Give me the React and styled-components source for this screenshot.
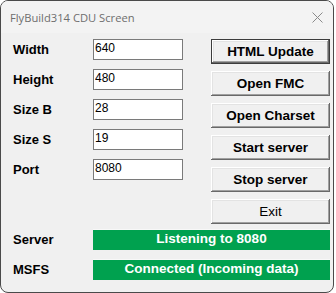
import React from 'react'
import styled, { createGlobalStyle } from 'styled-components'

const Global = createGlobalStyle`
    html, body {
        margin: 0;
        padding: 0;
        background: #ffffff;
    }
`;

const fields = [
    { label: 'Width', value: '640' },
    { label: 'Height', value: '480' },
    { label: 'Size B', value: '28' },
    { label: 'Size S', value: '19' },
    { label: 'Port', value: '8080' },
];

const buttons = ['HTML Update', 'Open FMC', 'Open Charset', 'Start server', 'Stop server', 'Exit'];

const status = [
    { label: 'Server', text: 'Listening to 8080' },
    { label: 'MSFS', text: 'Connected (Incoming data)' },
];

function App() {
    return (
        <>
            <Global />
            <Window>
                <TitleBar>
                    <Title>FlyBuild314 CDU Screen</Title>
                    <Close>
                        <svg width="11" height="11" viewBox="0 0 11 11">
                            <path d="M0.5 0.5 L10.5 10.5 M10.5 0.5 L0.5 10.5" stroke="#8a8a8a" strokeWidth="1" fill="none" />
                        </svg>
                    </Close>
                </TitleBar>
                <Body>
                    <Top>
                        <Fields>
                            {fields.map(f => (
                                <FieldRow key={f.label}>
                                    <Label>{f.label}</Label>
                                    <Input defaultValue={f.value} />
                                </FieldRow>
                            ))}
                        </Fields>
                        <Buttons>
                            {buttons.map((b, i) => (
                                <Button key={b} $default={i === 0} $exit={b === 'Exit'}>{b}</Button>
                            ))}
                        </Buttons>
                    </Top>
                    <StatusList>
                        {status.map(s => (
                            <FieldRow key={s.label}>
                                <Label>{s.label}</Label>
                                <StatusBar>{s.text}</StatusBar>
                            </FieldRow>
                        ))}
                    </StatusList>
                </Body>
            </Window>
        </>
    )
}

const Window = styled.div`
    width: 334px;
    height: 293px;
    box-sizing: border-box;
    border: 1px solid #4a4a4a;
    border-radius: 8px;
    background: #f0f0f0;
    display: flex;
    flex-direction: column;
    overflow: hidden;
`;

const TitleBar = styled.div`
    height: 32px;
    display: flex;
    align-items: center;
    justify-content: space-between;
    padding: 0 9px 0 9px;
    background: #f3f3f3;
`;

const Title = styled.div`
    font-family: "Open Sans", "Noto Sans", sans-serif;
    font-size: 11.2px;
    color: #6e6e6e;
`;

const Close = styled.div`
    display: flex;
    align-items: center;
    margin-right: 1px;
    margin-top: 1px;
`;

const Body = styled.div`
    padding: 6px 3px 0 12px;
    display: flex;
    flex-direction: column;
    gap: 5px;
`;

const Top = styled.div`
    display: flex;
    gap: 28px;
`;

const Fields = styled.div`
    display: flex;
    flex-direction: column;
    gap: 9px;
`;

const FieldRow = styled.div`
    display: flex;
    align-items: center;
    height: 21px;
`;

const Label = styled.div`
    width: 80px;
    flex-shrink: 0;
    font-family: "Liberation Sans", Arial, sans-serif;
    font-weight: bold;
    font-size: 13px;
    color: #000;
`;

const Input = styled.input`
    width: 90px;
    height: 21px;
    box-sizing: border-box;
    border: 1px solid #7a7a7a;
    background: #fff;
    margin: 0;
    padding: 0 1px 3px 1px;
    font-family: "Liberation Sans", Arial, sans-serif;
    font-size: 12px;
    color: #000;
    outline: none;
`;

const Buttons = styled.div`
    display: flex;
    flex-direction: column;
    gap: 7px;
`;

const Button = styled.button`
    width: 119px;
    height: 25px;
    margin: 0;
    padding: 0 0 1px;
    box-sizing: border-box;
    background: #f0f0f0;
    border: ${p => p.$default ? '1px solid #3c3c3c' : 'none'};
    box-shadow: inset -1px -1px #696969, inset 1px 1px #ffffff, inset -2px -2px #a0a0a0, inset 2px 2px #e3e3e3;
    font-family: "Liberation Sans", Arial, sans-serif;
    font-weight: ${p => p.$exit ? 'normal' : 'bold'};
    font-size: 13.5px;
    color: #000;
    text-align: center;
`;

const StatusList = styled.div`
    display: flex;
    flex-direction: column;
    gap: 9px;
`;

const StatusBar = styled.div`
    width: 237px;
    height: 21px;
    box-sizing: border-box;
    background: #00a14f;
    border-top: 1px solid #f8f8f8;
    display: flex;
    align-items: center;
    justify-content: center;
    padding-bottom: 3px;
    font-family: "Liberation Sans", Arial, sans-serif;
    font-weight: bold;
    font-size: 13.5px;
    color: #fff;
`;

export default App
